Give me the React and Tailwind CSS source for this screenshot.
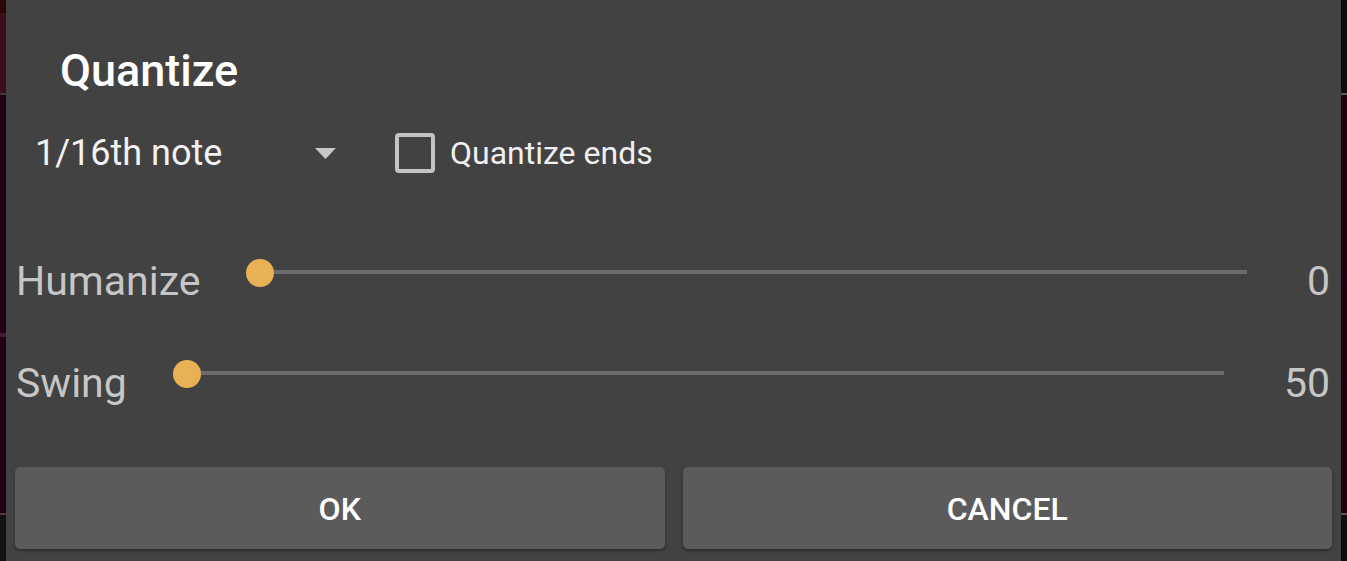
import React from "react";

function Slider({ className = "" }) {
  return (
    <div className={`relative h-[28px] flex-1 ${className}`}>
      <div className="absolute left-[14px] right-0 top-[11px] h-[4px] bg-[#6b6b6b]" />
      <div className="absolute left-0 top-0 h-[28px] w-[28px] rounded-full bg-[#e9b155]" />
    </div>
  );
}

export default function App() {
  return (
    <div className="flex h-[561px] w-[1347px] overflow-hidden bg-[#111] font-['Roboto',sans-serif]">
      {/* left strip */}
      <div className="flex w-[6px] flex-col">
        <div className="h-[13px] bg-[#2a0509]" />
        <div className="h-[80px] bg-[#3b0f19]" />
        <div className="h-[2px] bg-[#4e3440]" />
        <div className="h-[238px] bg-[#1f0013]" />
        <div className="h-[4px] bg-[#4a1b3f]" />
        <div className="h-[176px] bg-[#1f0013]" />
        <div className="h-[2px] bg-[#4a3a46]" />
        <div className="flex-1 bg-[#111111]" />
      </div>

      {/* dialog */}
      <div className="flex flex-1 flex-col bg-[#424242]">
        <div className="mt-[44px] h-[53px] pl-[54px] text-[45px] leading-[53px] font-medium text-white">
          Quantize
        </div>

        <div className="mt-[36px] flex h-[40px] items-center pl-[29px]">
          <div className="flex w-[301px] items-center justify-between">
            <span className="text-[36px] leading-[40px] text-[#f2f2f2]">1/16th note</span>
            <svg width="21" height="11" viewBox="0 0 21 11">
              <path d="M0 0 L21 0 L10.5 11 Z" fill="#c8c8c8" />
            </svg>
          </div>
          <div className="ml-[59px] h-[40px] w-[40px] rounded-[4px] border-[4px] border-[#c4c4c4]" />
          <span className="ml-[15px] text-[32px] leading-[40px] text-[#f0f0f0]">Quantize ends</span>
        </div>

        <div className="mt-[84px] flex h-[48px] items-start pl-[10px] pr-[11px]">
          <span className="text-[41px] leading-[48px] text-[#c6c6c6]">Humanize</span>
          <Slider className="ml-[46px] mt-[2px]" />
          <span className="ml-[60px] text-[41px] leading-[48px] text-[#c6c6c6]">0</span>
        </div>

        <div className="mt-[54px] flex h-[48px] items-start pl-[10px] pr-[11px]">
          <span className="text-[41px] leading-[48px] text-[#c6c6c6]">Swing</span>
          <Slider className="ml-[46px] mt-[1px]" />
          <span className="ml-[60px] text-[41px] leading-[48px] text-[#c6c6c6]">50</span>
        </div>

        <div className="mt-[60px] flex gap-[18px] px-[9px]">
          <button className="flex h-[82px] flex-1 items-center justify-center rounded-[5px] bg-[#5b5b5c] pt-[2px] text-[32px] font-medium text-white shadow-[0_2px_3px_rgba(0,0,0,0.35)]">
            OK
          </button>
          <button className="flex h-[82px] flex-1 items-center justify-center rounded-[5px] bg-[#5b5b5c] pt-[2px] text-[32px] font-medium text-white shadow-[0_2px_3px_rgba(0,0,0,0.35)]">
            CANCEL
          </button>
        </div>
      </div>

      {/* right strip */}
      <div className="flex w-[6px] flex-col">
        <div className="h-[93px] bg-[#0e0e0e]" />
        <div className="h-[2px] bg-[#5a5a5a]" />
        <div className="h-[418px] bg-[#1f0013]" />
        <div className="h-[2px] bg-[#6a4a60]" />
        <div className="flex-1 bg-[#0e0e0e]" />
      </div>
    </div>
  );
}
